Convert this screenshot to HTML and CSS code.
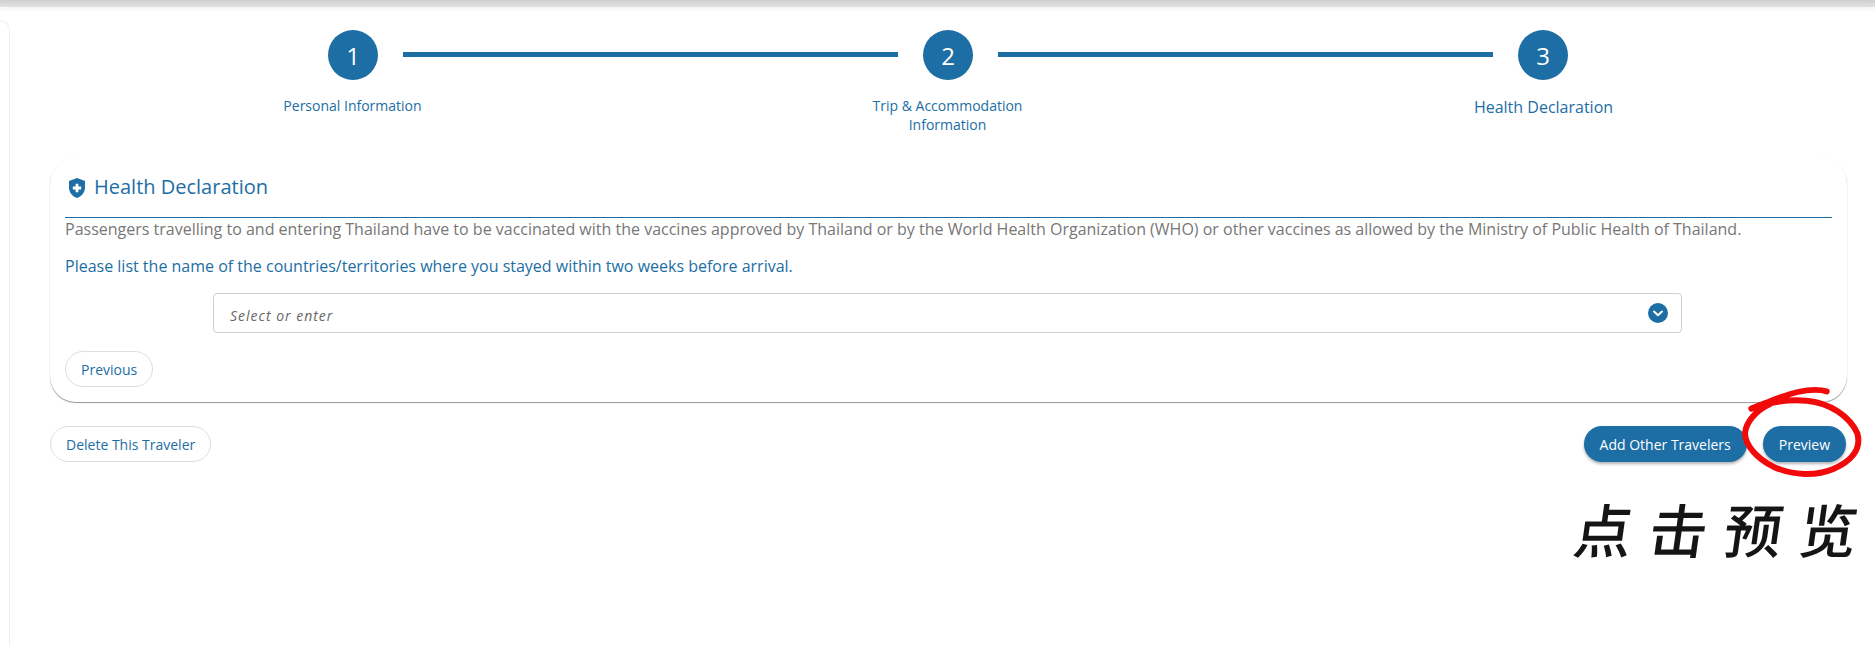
FILE: index.html
```html
<!DOCTYPE html>
<html lang="en">
<head>
<meta charset="utf-8">
<title>Health Declaration</title>
<link rel="stylesheet" href="styles.css">
</head>
<body>
<div class="topbar"></div>
<div class="page">
  <aside class="side"></aside>
  <main class="main">
    <div class="track">
      <span class="dot">1</span><span class="line"></span>
      <span class="dot">2</span><span class="line"></span>
      <span class="dot">3</span>
    </div>
    <div class="labels">
      <div class="label">Personal Information</div>
      <div class="label">Trip &amp; Accommodation<br>Information</div>
      <div class="label current">Health Declaration</div>
    </div>
    <section class="card">
      <header class="card-head">
        <svg class="shield" viewBox="0 0 16 20" aria-hidden="true"><path fill-rule="evenodd" d="M8 0 L16 3 V9.5 C16 14.5 12.6 18.4 8 20 C3.4 18.4 0 14.5 0 9.5 V3 Z M6.6 5.8 V8.6 H3.8 V11.4 H6.6 V14.2 H9.4 V11.4 H12.2 V8.6 H9.4 V5.8 Z"/></svg>
        <h2 class="card-title">Health Declaration</h2>
      </header>
      <p class="note">Passengers travelling to and entering Thailand have to be vaccinated with the vaccines approved by Thailand or by the World Health Organization (WHO) or other vaccines as allowed by the Ministry of Public Health of Thailand.</p>
      <p class="ask">Please list the name of the countries/territories where you stayed within two weeks before arrival.</p>
      <div class="select">
        <span class="placeholder">Select or enter</span>
        <svg class="chev" viewBox="0 0 20 20" aria-hidden="true"><circle cx="10" cy="10" r="10"/><path d="M6 8.6 L10 12.2 L14 8.6"/></svg>
      </div>
      <button class="btn ghost">Previous</button>
    </section>
    <div class="actions">
      <button class="btn ghost">Delete This Traveler</button>
      <div class="right">
        <button class="btn solid">Add Other Travelers</button>
        <button class="btn solid">Preview</button>
      </div>
    </div>
  </main>
</div>
<svg class="ring" viewBox="0 0 1125 660" aria-hidden="true">
  <path d="M980 364 C930 350 860 372 800 398 L754 416 C800 398 860 388 920 392 C990 398 1050 440 1072 490 C1086 540 1050 575 1000 597 C950 618 880 618 820 590 C770 565 735 525 735 490 C738 455 770 420 810 402"/>
</svg>
<div class="scrawl" lang="zh-CN"><span>点</span><span>击</span><span>预</span><span>览</span></div>
</body>
</html>
```

FILE: styles.css
```css
* { box-sizing: border-box; }
html, body { margin: 0; height: 646px; overflow: hidden; background: #fff; }
body { position: relative; font-family: "Open Sans", "Noto Sans", sans-serif; color: #1c6ea4; }

.topbar { height: 7px; background: linear-gradient(#cfcfcf, #e2e2e2); box-shadow: 0 2px 5px rgba(0,0,0,.05); }

.page { display: flex; height: 639px; }
.side { width: 10px; margin-top: 13px; border: 1px solid #efefef; border-left: 0; border-bottom: 0; border-top-right-radius: 10px; flex: none; }
.main { width: 1797px; margin-left: 40px; padding-top: 23px; flex: none; }

.track { display: flex; align-items: center; gap: 25px; padding: 0 279px 0 278px; }
.dot { width: 50px; height: 50px; border-radius: 50%; background: #1c6ea4; color: #fff; font-size: 24px; display: flex; align-items: center; justify-content: center; flex: none; }
.line { flex: 1; height: 5px; margin-top: -1px; background: #1c6ea4; }

.labels { display: grid; grid-template-columns: repeat(3, 1fr); padding: 0 7px 0 5px; margin-top: 16px; height: 62px; }
.label { font-size: 14px; line-height: 19px; text-align: center; }
.label.current { font-size: 16px; line-height: 22px; padding-left: 2px; }

.card { border-radius: 26px; padding: 0 15px 15px; box-shadow: 0 1px 1px rgba(0,0,0,.42), 0 0 1px rgba(0,0,0,.04); }
.card-head { height: 60px; padding: 0 0 2px 4px; display: flex; align-items: center; gap: 9px; border-bottom: 1px solid #1c6ea4; }
.shield { width: 16px; height: 20px; margin-top: 2px; fill: #1c6ea4; flex: none; }
.card-title { margin: 0; font-size: 20px; font-weight: 400; }
.note { margin: 0; font-size: 16px; line-height: 22px; color: #777; white-space: nowrap; }
.ask { margin: 15px 0 0; font-size: 16px; line-height: 22px; white-space: nowrap; }

.select { height: 40px; margin: 16px 150px 18px 148px; padding: 0 13px 0 16px; border: 1px solid #cfcfcf; border-radius: 4px; display: flex; align-items: center; justify-content: space-between; }
.placeholder { font-size: 14px; font-style: italic; letter-spacing: 1px; color: #666; padding-top: 4px; }
.chev { width: 20px; height: 20px; flex: none; }
.chev circle { fill: #1c6ea4; }
.chev path { fill: none; stroke: #fff; stroke-width: 2; stroke-linecap: round; stroke-linejoin: round; }

.btn { display: block; height: 36px; padding: 0 15px; border-radius: 18px; font-family: inherit; font-size: 14px; }
.ghost { background: #fff; color: #1c6ea4; border: 1px solid #ddd; }
.solid { background: #1c6ea4; color: #fff; border: 0; padding: 0 16px; font-weight: 500; box-shadow: 0 2px 3px rgba(0,0,0,.3); }

.actions { display: flex; justify-content: space-between; margin-top: 24px; }
.right { display: flex; gap: 16px; padding-right: 1px; }

.ring { position: absolute; left: 1500px; top: 270px; width: 375px; height: 220px; }
.ring path { fill: none; stroke: #f00a0a; stroke-width: 18; stroke-linecap: round; stroke-linejoin: round; }

.scrawl { position: absolute; left: 1575px; top: 486px; display: flex; gap: 17px; font-family: "Noto Sans CJK SC", "Noto Sans", sans-serif; font-size: 58px; line-height: 84px; color: #151515; font-weight: 500; transform: skewX(-8deg); }
```
